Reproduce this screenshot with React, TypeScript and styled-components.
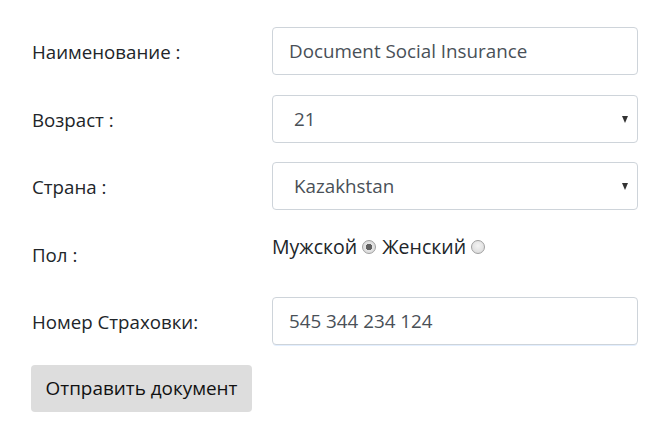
import { useState } from "react";
import styled, { createGlobalStyle } from "styled-components";

const GlobalStyle = createGlobalStyle`
  html, body {
    margin: 0;
    padding: 0;
    background: #fff;
  }
  body {
    font-family: "Open Sans", "Noto Sans", sans-serif;
    color: #212529;
  }
`;

export default function App() {
  const [name, setName] = useState("Document Social Insurance");
  const [age, setAge] = useState("21");
  const [country, setCountry] = useState("Kazakhstan");
  const [gender, setGender] = useState("male");
  const [insurance, setInsurance] = useState("545 344 234 124");

  return (
    <>
      <GlobalStyle />
      <Form onSubmit={(e) => e.preventDefault()}>
        <Row>
          <Label htmlFor="name">Наименование :</Label>
          <Input id="name" value={name} onChange={(e) => setName(e.target.value)} />
        </Row>
        <Row>
          <Label htmlFor="age">Возраст :</Label>
          <SelectWrap>
            <Select id="age" value={age} onChange={(e) => setAge(e.target.value)}>
              {Array.from({ length: 50 }, (_, i) => i + 18).map((n) => (
                <option key={n} value={String(n)}>
                  {n}
                </option>
              ))}
            </Select>
          </SelectWrap>
        </Row>
        <Row>
          <Label htmlFor="country">Страна :</Label>
          <SelectWrap>
            <Select
              id="country"
              value={country}
              onChange={(e) => setCountry(e.target.value)}
            >
              <option>Kazakhstan</option>
              <option>Russia</option>
              <option>Uzbekistan</option>
            </Select>
          </SelectWrap>
        </Row>
        <Row>
          <Label>Пол :</Label>
          <RadioGroup>
            <RadioLabel>
              Мужской
              <Radio
                type="radio"
                name="gender"
                checked={gender === "male"}
                onChange={() => setGender("male")}
              />
            </RadioLabel>
            <RadioLabel>
              Женский
              <Radio
                type="radio"
                name="gender"
                checked={gender === "female"}
                onChange={() => setGender("female")}
              />
            </RadioLabel>
          </RadioGroup>
        </Row>
        <Row>
          <Label htmlFor="insurance">Номер Страховки:</Label>
          <Input
            id="insurance"
            $focused
            value={insurance}
            onChange={(e) => setInsurance(e.target.value)}
          />
        </Row>
        <Submit type="submit">Отправить документ</Submit>
      </Form>
    </>
  );
}

const Form = styled.form`
  display: flex;
  flex-direction: column;
  gap: 19.5px;
  padding: 27px 0 0 32px;
`;

const Row = styled.div`
  display: grid;
  grid-template-columns: 240px 366px;
  height: 48px;
`;

const Label = styled.label`
  font-size: 18.7px;
  line-height: 24px;
  padding-top: 13px;
`;

const Input = styled.input<{ $focused?: boolean }>`
  box-sizing: border-box;
  width: 100%;
  height: 48px;
  padding: 0 16px;
  font-family: inherit;
  font-size: 18.8px;
  color: #495057;
  border: 1px solid #ced4da;
  border-radius: 4px;
  outline: none;
  box-shadow: ${({ $focused }) => ($focused ? "0 2px 0 -1px #e3efff" : "none")};
`;

const SelectWrap = styled.div`
  position: relative;
  &::after {
    content: "";
    position: absolute;
    right: 10px;
    top: 21px;
    border-left: 3.5px solid transparent;
    border-right: 3.5px solid transparent;
    border-top: 7px solid #333;
    pointer-events: none;
  }
`;

const Select = styled.select`
  box-sizing: border-box;
  width: 100%;
  height: 48px;
  padding: 0 30px 0 21px;
  font-family: inherit;
  font-size: 18.8px;
  color: #495057;
  background: #fff;
  border: 1px solid #ced4da;
  border-radius: 4px;
  appearance: none;
  outline: none;
`;

const RadioGroup = styled.div`
  display: flex;
  align-items: center;
  gap: 6px;
  height: 24px;
  padding-top: 5px;
`;

const RadioLabel = styled.label`
  display: flex;
  align-items: center;
  gap: 5px;
  font-size: 19.5px;
  line-height: 24px;
  color: #212529;
`;

const Radio = styled.input`
  appearance: none;
  margin: 0;
  width: 14px;
  height: 14px;
  border-radius: 50%;
  border: 1px solid #a0a0a0;
  background: radial-gradient(circle at 50% 40%, #f4f4f4, #d6d6d6);
  &:checked {
    background: radial-gradient(circle, #606060 0 3px, #e4e4e4 3.5px, #d2d2d2 100%);
  }
`;

const Submit = styled.button`
  align-self: flex-start;
  margin-left: -1px;
  width: 221px;
  height: 47px;
  font-family: inherit;
  font-size: 18.9px;
  color: #111;
  background: #dddddd;
  border: none;
  border-radius: 4px;
  cursor: pointer;
`;
